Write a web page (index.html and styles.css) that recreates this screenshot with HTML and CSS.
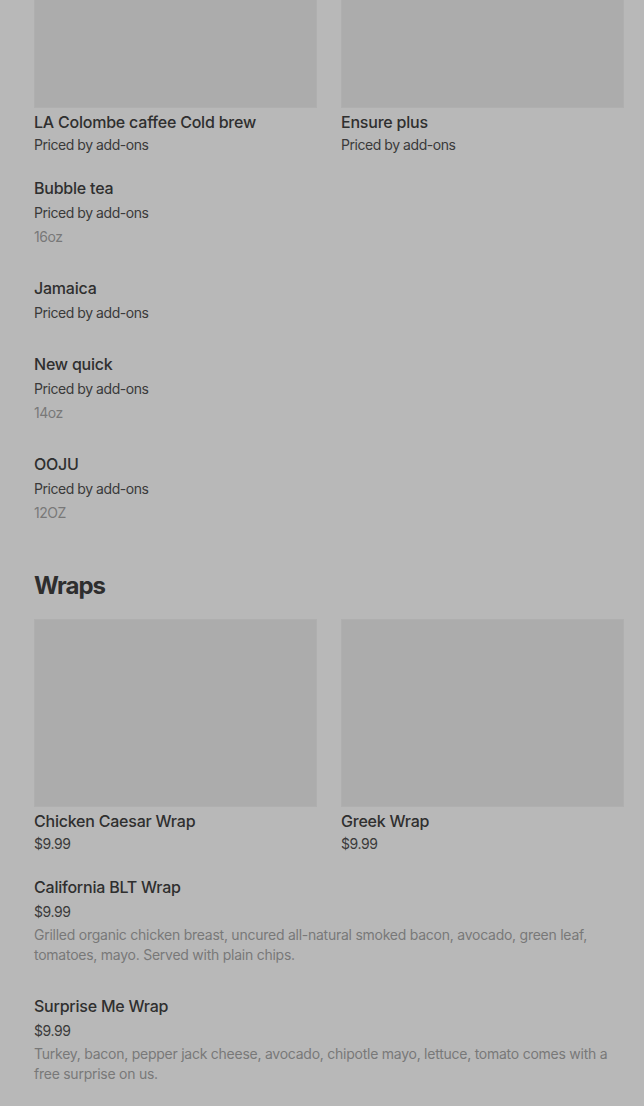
FILE: index.html
```html
<!DOCTYPE html>
<html lang="en">
<head>
<meta charset="utf-8">
<title>Menu</title>
<link rel="stylesheet" href="styles.css">
</head>
<body>
<main class="menu">
  <section class="section section-first">
    <div class="card-grid">
      <div class="card">
        <div class="card-image"></div>
        <div class="item-title">LA Colombe caffee Cold brew</div>
        <div class="item-price card-price">Priced by add-ons</div>
      </div>
      <div class="card">
        <div class="card-image"></div>
        <div class="item-title">Ensure plus</div>
        <div class="item-price card-price">Priced by add-ons</div>
      </div>
    </div>
    <div class="item">
      <div class="item-title">Bubble tea</div>
      <div class="item-price">Priced by add-ons</div>
      <div class="item-note">16oz</div>
    </div>
    <div class="item">
      <div class="item-title">Jamaica</div>
      <div class="item-price">Priced by add-ons</div>
    </div>
    <div class="item">
      <div class="item-title">New quick</div>
      <div class="item-price">Priced by add-ons</div>
      <div class="item-note">14oz</div>
    </div>
    <div class="item">
      <div class="item-title">OOJU</div>
      <div class="item-price">Priced by add-ons</div>
      <div class="item-note">12OZ</div>
    </div>
  </section>

  <section class="section">
    <h2 class="section-title">Wraps</h2>
    <div class="card-grid">
      <div class="card">
        <div class="card-image"></div>
        <div class="item-title">Chicken Caesar Wrap</div>
        <div class="item-price card-price">$9.99</div>
      </div>
      <div class="card">
        <div class="card-image"></div>
        <div class="item-title">Greek Wrap</div>
        <div class="item-price card-price">$9.99</div>
      </div>
    </div>
    <div class="item">
      <div class="item-title">California BLT Wrap</div>
      <div class="item-price">$9.99</div>
      <div class="item-note item-desc">Grilled organic chicken breast, uncured all-natural smoked bacon, avocado, green leaf, tomatoes, mayo. Served with plain chips.</div>
    </div>
    <div class="item">
      <div class="item-title">Surprise Me Wrap</div>
      <div class="item-price">$9.99</div>
      <div class="item-note item-desc">Turkey, bacon, pepper jack cheese, avocado, chipotle mayo, lettuce, tomato comes with a free surprise on us.</div>
    </div>
  </section>
</main>
</body>
</html>
```

FILE: styles.css
```css
html, body {
  margin: 0;
  padding: 0;
  background: #b8b8b8;
}

body {
  font-family: Inter, "Noto Sans", Roboto, sans-serif;
  color: #2e2e2e;
  overflow: hidden;
  height: 1106px;
}

.menu {
  padding: 0 20px 0 34px;
}

.section-first {
  margin-top: -80px;
}

.card-grid {
  display: grid;
  grid-template-columns: 283px 283px;
  column-gap: 24px;
  margin-bottom: 7px;
}

.card-image {
  height: 188px;
  background: #acacac;
  box-sizing: border-box;
  border: 1px solid #afafaf;
}

.card .item-title {
  margin-top: 2px;
}

.item-title {
  font-size: 16px;
  line-height: 24px;
  font-weight: 500;
  color: #2f2f2f;
  letter-spacing: -0.22px;
}

.item-price {
  font-size: 14px;
  line-height: 20px;
  margin-top: 3px;
  color: #3a3a3a;
  letter-spacing: -0.45px;
}

.card-price {
  margin-top: 1px;
}

.item {
  padding: 14px 0 15px;
}

.item-note {
  font-size: 14px;
  line-height: 20px;
  margin-top: 4px;
  color: #787878;
  letter-spacing: -0.45px;
}

.item-desc {
  margin-top: 3px;
  letter-spacing: -0.25px;
}

.section-title {
  margin: 32px 0 17px;
  font-size: 24px;
  line-height: 32px;
  font-weight: 700;
  letter-spacing: -1px;
  color: #2e2e2e;
}
```
